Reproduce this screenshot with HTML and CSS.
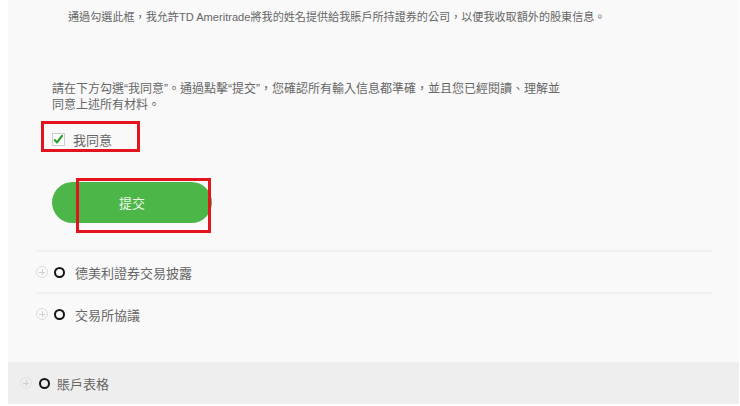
FILE: index.html
```html
<!DOCTYPE html>
<html lang="zh-Hant">
<head>
<meta charset="utf-8">
<link rel="stylesheet" href="styles.css">
</head>
<body>
<div class="panel">
  <p class="notice">通過勾選此框，我允許TD Ameritrade將我的姓名提供給我賬戶所持證券的公司，以便我收取額外的股東信息。</p>
  <p class="consent">請在下方勾選“我同意”。通過點擊“提交”，您確認所有輸入信息都準確，並且您已經閱讀、理解並同意上述所有材料。</p>
  <label class="agree">
    <span class="checkbox"><svg viewBox="0 0 12 12" width="11" height="11"><path d="M2 6.6 L4.4 9.2 L9.8 2" fill="none" stroke="#2e9f2c" stroke-width="2.4" stroke-linecap="round" stroke-linejoin="round"/></svg></span>
    <span class="agree-text">我同意</span>
    <span class="mark mark-agree"></span>
  </label>
  <div class="submit-wrap">
    <button class="submit">提交</button>
    <span class="mark mark-submit"></span>
  </div>
  <div class="sections">
    <div class="row">
      <span class="plus"></span><span class="ring"></span><span class="row-text">德美利證券交易披露</span>
    </div>
    <div class="row">
      <span class="plus"></span><span class="ring"></span><span class="row-text">交易所協議</span>
    </div>
  </div>
</div>
<div class="band">
  <span class="plus"></span><span class="ring"></span><span class="row-text">賬戶表格</span>
</div>
</body>
</html>
```

FILE: styles.css
```css
html, body {
  margin: 0;
  padding: 0;
  background: #ffffff;
}
body {
  font-family: "Liberation Sans", "Noto Sans CJK TC", sans-serif;
  color: #666666;
  font-size: 12px;
}
.panel {
  margin-left: 8px;
  width: 731px;
  background: #f9f9f9;
  padding: 9px 0 28px 0;
  box-sizing: border-box;
}
.notice {
  margin: 0;
  padding-left: 60px;
  line-height: 16px;
  font-size: 11.1px;
  white-space: nowrap;
}
.consent {
  margin: 56px 0 0 44px;
  width: 518px;
  line-height: 16px;
  font-size: 12px;
}
.agree {
  position: relative;
  display: flex;
  align-items: center;
  margin: 18px 0 0 44px;
  height: 16px;
  width: max-content;
}
.checkbox {
  width: 13px;
  height: 13px;
  box-sizing: border-box;
  border: 1px solid #cccccc;
  background: #ffffff;
  display: flex;
  align-items: center;
  justify-content: center;
}
.agree-text {
  margin-left: 8px;
  font-size: 13px;
  color: #666;
}
.mark {
  position: absolute;
  box-sizing: border-box;
  border: 3px solid #e2151f;
}
.mark-agree {
  left: -11px;
  top: -10px;
  width: 99px;
  height: 31px;
}
.submit-wrap {
  position: relative;
  margin: 35px 0 0 44px;
  width: 160px;
  height: 41px;
}
.submit {
  display: block;
  width: 160px;
  height: 41px;
  border: none;
  border-radius: 21px;
  background: #4cb748;
  color: #eef8e8;
  font-family: "Liberation Sans", "Noto Sans CJK TC", sans-serif;
  font-size: 13px;
  padding: 0;
}
.mark-submit {
  left: 24px;
  top: -4px;
  width: 135px;
  height: 55px;
}
.sections {
  margin: 27px 27px 0 28px;
}
.row {
  display: flex;
  align-items: center;
  height: 40px;
  border-top: 2px solid #efefef;
}
.plus {
  position: relative;
  width: 12px;
  height: 12px;
  box-sizing: border-box;
  border: 1px solid #dddddd;
  border-radius: 50%;
  flex: none;
}
.plus::before,
.plus::after {
  content: "";
  position: absolute;
  background: #d0d0d0;
}
.plus::before {
  left: 2px;
  right: 2px;
  top: 4.5px;
  height: 1px;
}
.plus::after {
  top: 2px;
  bottom: 2px;
  left: 4.5px;
  width: 1px;
}
.ring {
  width: 11px;
  height: 11px;
  box-sizing: border-box;
  border: 2px solid #151515;
  border-radius: 50%;
  margin-left: 6px;
  flex: none;
}
.row-text {
  margin-left: 10px;
  font-size: 13px;
  color: #666;
}
.band {
  margin-left: 8px;
  width: 731px;
  height: 42px;
  background: #eeeeee;
  display: flex;
  align-items: center;
  padding-left: 12px;
  box-sizing: border-box;
}
.band .ring {
  margin-left: 7px;
}
.band .row-text {
  margin-left: 7px;
}
.band .plus {
  border-color: #e2e2e2;
}
```
